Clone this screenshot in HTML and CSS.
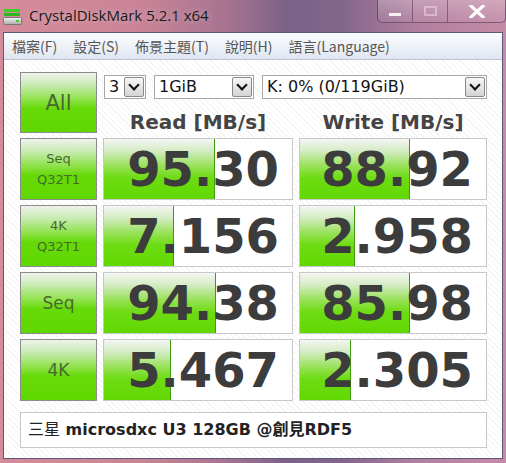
FILE: index.html
```html
<!DOCTYPE html>
<html lang="zh-Hant">
<head>
    <meta charset="UTF-8">
    <title>CrystalDiskMark 5.2.1 x64</title>
    <link rel="stylesheet" href="styles.css">
</head>
<body>
    <div class="window">
        <div class="titlebar">
            <svg class="app-icon" width="20" height="18" viewBox="0 0 20 18">
                <defs>
                    <linearGradient id="drive" x1="0" y1="0" x2="0" y2="1">
                        <stop offset="0" stop-color="#f4f4f4"/>
                        <stop offset="1" stop-color="#a9a9a9"/>
                    </linearGradient>
                </defs>
                <rect x="1" y="1" width="16" height="3" fill="#3fcf2a"/>
                <rect x="1" y="5" width="16" height="3" fill="#2fb51e"/>
                <rect x="0.5" y="9.5" width="18" height="7" rx="1" fill="url(#drive)" stroke="#777"/>
                <rect x="13" y="12" width="3" height="2" fill="#46d12c"/>
            </svg>
            <span class="title">CrystalDiskMark 5.2.1 x64</span>
            <div class="caption-buttons">
                <div class="cap-btn minimize"><span class="bar"></span></div>
                <div class="cap-btn maximize"><span class="square"></span></div>
                <div class="cap-btn close">
                    <svg width="16" height="13" viewBox="0 0 16 13">
                        <path d="M2 1 L14 12 M14 1 L2 12" stroke="#fff" stroke-width="3.2" stroke-linecap="square"/>
                    </svg>
                </div>
            </div>
        </div>

        <div class="client">
            <div class="menubar">
                <span>檔案(F)</span>
                <span>設定(S)</span>
                <span>佈景主題(T)</span>
                <span>說明(H)</span>
                <span>語言(Language)</span>
            </div>

            <div class="panel">
                <div class="grid">
                    <div class="test-btn big">All</div>
                    <div class="top">
                        <div class="combos">
                            <div class="combo count">3<span class="arrow"></span></div>
                            <div class="combo size">1GiB<span class="arrow"></span></div>
                            <div class="combo drive">K: 0% (0/119GiB)<span class="arrow"></span></div>
                        </div>
                        <div class="headings">
                            <div>Read [MB/s]</div>
                            <div>Write [MB/s]</div>
                        </div>
                    </div>

                    <div class="test-btn small">Seq<br>Q32T1</div>
                    <div class="value"><div class="fill" style="width: 110px"></div><span>95.30</span></div>
                    <div class="value"><div class="fill" style="width: 109px"></div><span>88.92</span></div>

                    <div class="test-btn small">4K<br>Q32T1</div>
                    <div class="value"><div class="fill" style="width: 69px"></div><span>7.156</span></div>
                    <div class="value"><div class="fill" style="width: 54px"></div><span>2.958</span></div>

                    <div class="test-btn mid">Seq</div>
                    <div class="value"><div class="fill" style="width: 111px"></div><span>94.38</span></div>
                    <div class="value"><div class="fill" style="width: 109px"></div><span>85.98</span></div>

                    <div class="test-btn mid">4K</div>
                    <div class="value"><div class="fill" style="width: 66px"></div><span>5.467</span></div>
                    <div class="value"><div class="fill" style="width: 50px"></div><span>2.305</span></div>
                </div>

                <div class="comment"><span class="light">三星</span> microsdxc U3 128GB @創見RDF5</div>
            </div>
        </div>
    </div>
</body>
</html>
```

FILE: styles.css
```css
body {
    margin: 0;
    padding: 0;
    width: 506px;
    height: 463px;
    overflow: hidden;
    font-family: 'DejaVu Sans', Verdana, sans-serif;
}

.window {
    height: 463px;
    background: linear-gradient(to right, #d48b9b 0%, #c98497 28%, #a77390 45%, #7a6288 57%, #84668c 68%, #b17f9e 82%, #c58ba6 100%);
    position: relative;
}

.titlebar {
    height: 33px;
    display: flex;
    align-items: flex-start;
    padding-left: 3px;
    box-sizing: border-box;
}

.app-icon {
    margin-top: 8px;
}

.title {
    margin-left: 6px;
    margin-top: 5px;
    font-family: 'Open Sans', 'Noto Sans', sans-serif;
    font-size: 15px;
    color: #1a1a1a;
    text-shadow: 0 0 6px rgba(255, 255, 255, 0.45);
}

.caption-buttons {
    position: absolute;
    top: 0;
    left: 377px;
    display: flex;
    height: 22px;
    border: 1px solid rgba(60, 30, 60, 0.55);
    border-top: none;
    border-radius: 0 0 5px 5px;
    overflow: hidden;
    background: linear-gradient(to bottom, rgba(255, 255, 255, 0.25), rgba(255, 255, 255, 0.05));
}

.cap-btn {
    display: flex;
    align-items: center;
    justify-content: center;
    border-right: 1px solid rgba(60, 30, 60, 0.45);
}

.cap-btn.minimize,
.cap-btn.maximize {
    width: 34px;
}

.cap-btn.close {
    width: 57px;
    border-right: none;
}

.bar {
    width: 12px;
    height: 3px;
    margin-top: 7px;
    background: #f6f0f4;
}

.square {
    width: 9px;
    height: 6px;
    border: 2px solid rgba(230, 210, 225, 0.6);
}

.client {
    position: absolute;
    left: 3px;
    top: 32px;
    width: 498px;
    height: 425px;
    border: 1px solid #5b5a7a;
    background: repeating-linear-gradient(45deg, #ffffff 0px, #ffffff 3px, #f4f4f4 3px, #f4f4f4 4px);
}

.menubar {
    height: 26px;
    display: flex;
    align-items: center;
    gap: 16px;
    padding-left: 8px;
    background: linear-gradient(to bottom, #fbfcfe 0%, #eef2f8 50%, #dfe6f0 100%);
    border-bottom: 1px solid #b9c5d6;
    font-family: 'Noto Sans CJK TC', 'Noto Sans', sans-serif;
    font-size: 14px;
    color: #555;
}

.panel {
    padding: 12px 0 0 16px;
}

.grid {
    display: grid;
    grid-template-columns: 77px 190px 188px;
    grid-template-rows: 61px repeat(4, 62px);
    column-gap: 6px;
    row-gap: 5px;
}

.test-btn {
    display: flex;
    align-items: center;
    justify-content: center;
    text-align: center;
    border: 1px solid #8c8c8c;
    box-sizing: border-box;
    background: linear-gradient(to bottom, #eef3ec 0%, #c9ebb4 20%, #8ee24a 45%, #66da08 60%, #5fd800 100%);
    color: #466a2c;
}

.test-btn.big {
    font-size: 21px;
}

.test-btn.small {
    font-size: 13px;
    line-height: 21px;
}

.test-btn.mid {
    font-size: 17px;
}

.top {
    grid-column: 2 / 4;
    display: flex;
    flex-direction: column;
}

.combos {
    display: flex;
    margin-top: 3px;
    margin-left: 1px;
    gap: 8px;
}

.combo {
    height: 24px;
    box-sizing: border-box;
    border: 1px solid #a8a8a8;
    background: #fff;
    position: relative;
    font-size: 16px;
    line-height: 22px;
    padding-left: 4px;
    color: #111;
}

.combo.count {
    width: 42px;
}

.combo.size {
    width: 100px;
}

.combo.drive {
    width: 225px;
}

.arrow {
    position: absolute;
    right: 1px;
    top: 1px;
    width: 20px;
    height: 20px;
    box-sizing: border-box;
    border: 1px solid #8a8a8a;
    border-radius: 2px;
    background: linear-gradient(to bottom, #f6f6f6 0%, #e6e6e6 50%, #d4d4d4 100%);
}

.arrow::after {
    content: '';
    position: absolute;
    left: 5px;
    top: 3px;
    width: 6px;
    height: 6px;
    border-right: 2px solid #111;
    border-bottom: 2px solid #111;
    transform: rotate(45deg);
}

.headings {
    display: grid;
    grid-template-columns: 190px 188px;
    column-gap: 6px;
    margin-top: 11px;
    font-weight: bold;
    font-size: 20px;
    color: #444;
    text-align: center;
}

.value {
    position: relative;
    border: 1px solid #c8c8c8;
    box-sizing: border-box;
    background: #fff;
    text-align: right;
    overflow: hidden;
}

.fill {
    position: absolute;
    left: 0;
    top: 0;
    bottom: 0;
    border-right: 1px solid #3f9c10;
    background: linear-gradient(to bottom, #f4f6f3 0%, #d4ecc4 20%, #98e158 45%, #6ddc12 65%, #62d802 100%);
}

.value span {
    position: relative;
    display: block;
    padding-right: 13px;
    font-weight: bold;
    font-size: 48px;
    line-height: 60px;
    color: #3c3c3c;
}

.comment {
    margin-top: 11px;
    width: 467px;
    height: 36px;
    box-sizing: border-box;
    border: 1px solid #c8c8c8;
    background: #fff;
    padding-left: 7px;
    font-family: 'DejaVu Sans', 'Noto Sans CJK TC', sans-serif;
    font-weight: bold;
    font-size: 16px;
    line-height: 34px;
    color: #222;
}

.comment .light {
    font-weight: normal;
}
```
